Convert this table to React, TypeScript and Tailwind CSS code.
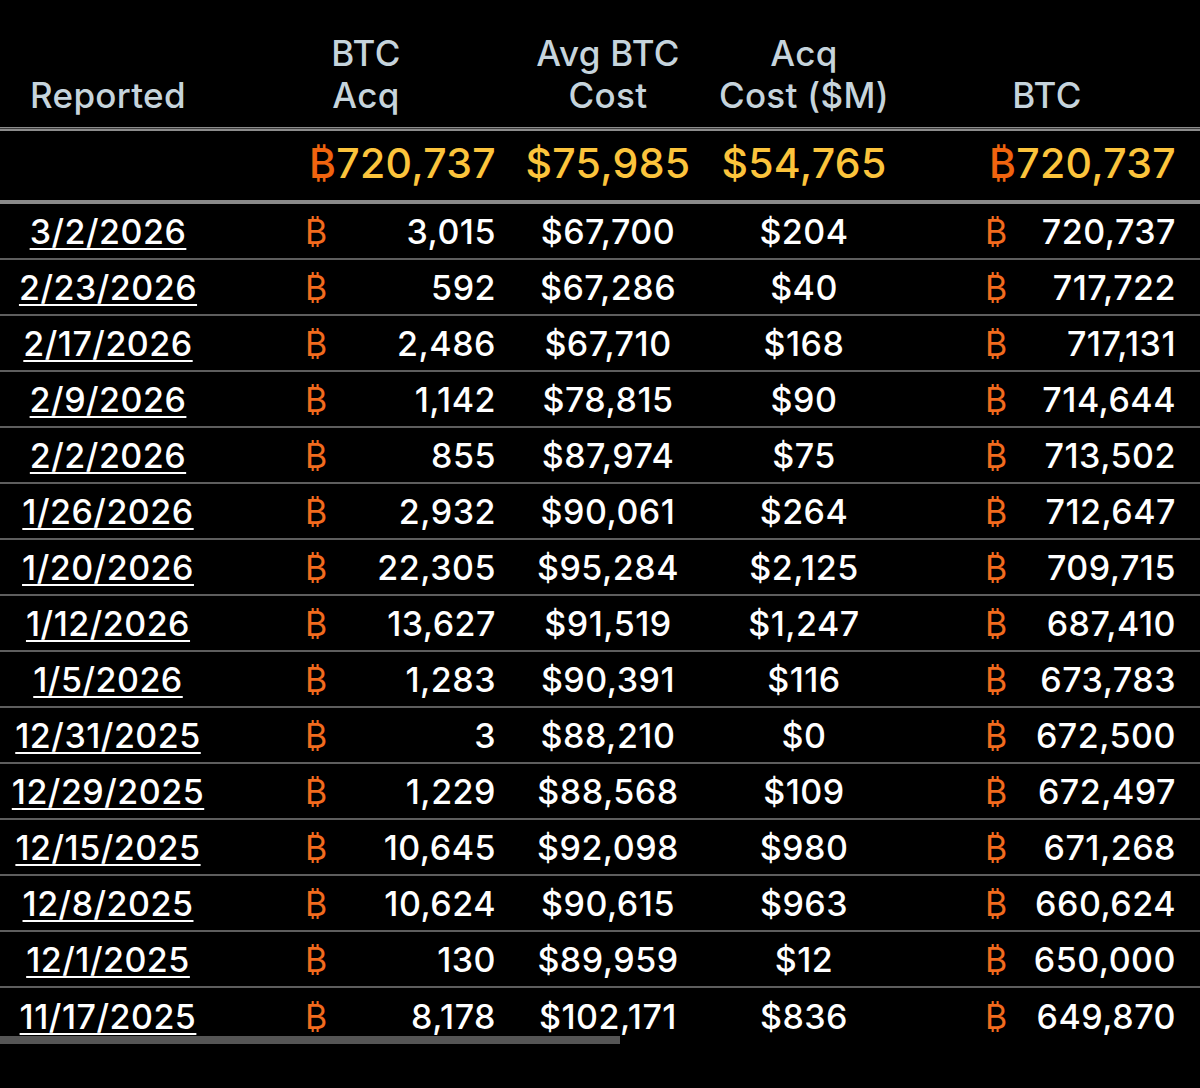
const rows = [
  ["3/2/2026", "3,015", "$67,700", "$204", "720,737"],
  ["2/23/2026", "592", "$67,286", "$40", "717,722"],
  ["2/17/2026", "2,486", "$67,710", "$168", "717,131"],
  ["2/9/2026", "1,142", "$78,815", "$90", "714,644"],
  ["2/2/2026", "855", "$87,974", "$75", "713,502"],
  ["1/26/2026", "2,932", "$90,061", "$264", "712,647"],
  ["1/20/2026", "22,305", "$95,284", "$2,125", "709,715"],
  ["1/12/2026", "13,627", "$91,519", "$1,247", "687,410"],
  ["1/5/2026", "1,283", "$90,391", "$116", "673,783"],
  ["12/31/2025", "3", "$88,210", "$0", "672,500"],
  ["12/29/2025", "1,229", "$88,568", "$109", "672,497"],
  ["12/15/2025", "10,645", "$92,098", "$980", "671,268"],
  ["12/8/2025", "10,624", "$90,615", "$963", "660,624"],
  ["12/1/2025", "130", "$89,959", "$12", "650,000"],
  ["11/17/2025", "8,178", "$102,171", "$836", "649,870"],
];

const cols = "grid grid-cols-[216px_300px_184px_208px_292px]";

export default function App() {
  return (
    <div
      className="w-[1200px] h-[1088px] bg-black text-white overflow-hidden"
      style={{ fontFamily: "Inter, 'Noto Sans', sans-serif" }}
    >
      <div className="relative">
        {/* HEADER */}
        <div
          className={`${cols} h-[127px] items-end pb-[11px] text-[35px] leading-[42px] font-medium tracking-[0.3px] text-[#c6d4dc]`}
        >
          <div className="text-center">Reported</div>
          <div className="text-center">
            BTC
            <br />
            Acq
          </div>
          <div className="text-center">
            Avg BTC
            <br />
            Cost
          </div>
          <div className="text-center">
            Acq
            <br />
            Cost ($M)
          </div>
          <div className="text-center pr-[14px]">BTC</div>
        </div>
        <div className="h-[4px] border-t border-b-2 border-[#8c8c8c] bg-[#3c3c3c]" />

        {/* TOTALS */}
        <div
          className={`${cols} h-[69px] items-center pb-[4px] text-[41px] font-medium tracking-[0.3px] text-[#fcc43c]`}
        >
          <div />
          <div className="text-right pr-[20px]">
            <span className="text-[#f0640f]">₿</span>720,737
          </div>
          <div className="text-center">$75,985</div>
          <div className="text-center">$54,765</div>
          <div className="text-right pr-[24px]">
            <span className="text-[#f0640f]">₿</span>720,737
          </div>
        </div>
        <div className="h-[4px] bg-[#8a8a8a]" />

        {/* ROWS */}
        {rows.map(([date, acq, avg, cost, total], i) => (
          <div
            key={date}
            className={`${cols} h-[56px] items-center text-[34px] font-medium tracking-[0.5px] ${
              i < rows.length - 1 ? "border-b-2 border-[#5e5e5e]" : ""
            }`}
          >
            <div className="text-center underline decoration-2 underline-offset-[4px]">{date}</div>
            <div className="flex justify-between pl-[89px] pr-[20px]">
              <span className="text-[#f26b1e] font-normal">₿</span>
              <span>{acq}</span>
            </div>
            <div className="text-center">{avg}</div>
            <div className="text-center">{cost}</div>
            <div className="flex justify-between pl-[77px] pr-[24px]">
              <span className="text-[#f26b1e] font-normal">₿</span>
              <span>{total}</span>
            </div>
          </div>
        ))}

        {/* horizontal scroll indicator */}
        <div className="absolute left-0 bottom-0 w-[620px] h-[8px] bg-[#555555]" />
      </div>
    </div>
  );
}
